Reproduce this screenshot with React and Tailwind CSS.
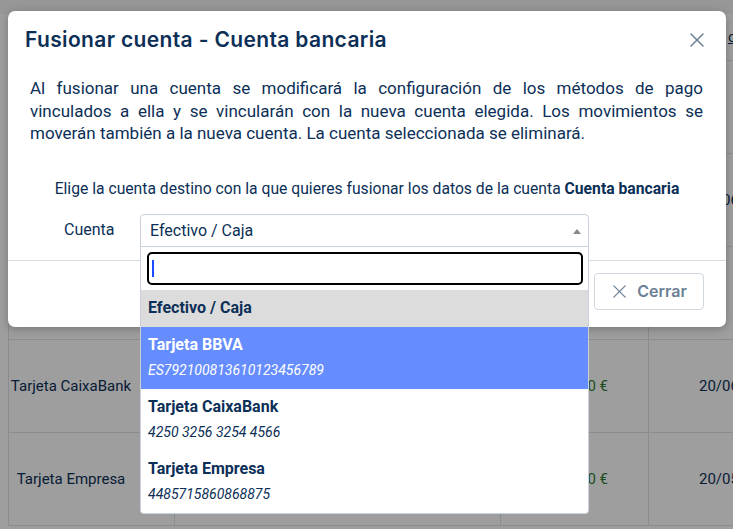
import React from 'react';

const rows = [
    { name: 'Efectivo / Caja', amount: '120,00 €', date: '' },
    { name: 'Cuenta bancaria', amount: '980,00 €', date: '20/06/2023' },
    { name: 'Tarjeta BBVA', amount: '40,00 €', date: '' },
    { name: 'Tarjeta CaixaBank', amount: '0,00 €', date: '20/06/2023' },
    { name: 'Tarjeta Empresa', amount: '0,00 €', date: '20/05/2023' },
];

const options = [
    { name: 'Tarjeta BBVA', detail: 'ES7921008136101234567 89'.replace(' ', ''), active: true },
    { name: 'Tarjeta CaixaBank', detail: '4250 3256 3254 4566' },
    { name: 'Tarjeta Empresa', detail: '4485715860868875' },
];

const XIcon = ({ className, strokeWidth = 2 }) => (
    <svg viewBox="0 0 24 24" fill="none" stroke="currentColor" strokeWidth={strokeWidth} strokeLinecap="round" className={className}>
        <path d="M4 4l16 16M20 4L4 20" />
    </svg>
);

const App = () => {
    return (
        <div className="relative w-[733px] h-[529px] overflow-hidden bg-white font-['Roboto',sans-serif] text-[#0c2f57]">
            {/* table behind the modal */}
            <div className="h-[14px] bg-[#f4f4f4]" />
            <div className="ml-[8px] border-l border-[#dfe3e8]">
                <div className="flex h-[47px] border-b border-[#dfe3e8] text-[15px]">
                    <div className="w-[640px] shrink-0" />
                    <div className="flex-1 min-w-0 flex items-center pl-[79px] underline whitespace-nowrap">cobro</div>
                </div>
                {rows.map((row, i) => (
                    <div key={i} className="flex h-[93px] border-b border-[#dfe3e8] text-[15px]">
                        <div className="w-[124px] shrink-0 flex items-center justify-center whitespace-nowrap">{row.name}</div>
                        <div className="w-[42px] shrink-0 border-r border-[#dfe3e8]" />
                        <div className="w-[326px] shrink-0 border-r border-[#dfe3e8]" />
                        <div className="w-[148px] shrink-0 border-r border-[#dfe3e8] flex items-center justify-end pr-[40px] text-[#2e7d32] whitespace-nowrap">{row.amount}</div>
                        <div className="flex-1 min-w-0 flex items-center pl-[50px] whitespace-nowrap">{row.date}</div>
                    </div>
                ))}
            </div>

            {/* overlay */}
            <div className="absolute inset-0 bg-black/[0.38]" />

            {/* modal */}
            <div className="absolute left-[8px] top-[11px] w-[718px] h-[316px] bg-white rounded-[7px] shadow-[0_2px_8px_rgba(0,0,0,0.25)] flex flex-col">
                <div className="flex items-center justify-between pl-[17px] pr-[20px] pt-[15px]">
                    <h2 className="font-['Inter',sans-serif] font-semibold text-[21px] leading-[28px] tracking-[0.35px] text-[#0c2f57]">
                        Fusionar cuenta - Cuenta bancaria
                    </h2>
                    <XIcon className="w-[18px] h-[18px] text-[#6b7f95]" />
                </div>

                <p className="mt-[23px] pl-[22px] pr-[23px] text-[17px] leading-[22.5px] text-justify text-[#0c2f57]">
                    Al fusionar una cuenta se modificará la configuración de los métodos de pago vinculados a ella y se vincularán con la nueva cuenta elegida. Los movimientos se moverán también a la nueva cuenta. La cuenta seleccionada se eliminará.
                </p>

                <p className="mt-[33px] text-center text-[15.7px] leading-[22px] text-[#0c2f57]">
                    Elige la cuenta destino con la que quieres fusionar los datos de la cuenta <b className="font-bold">Cuenta bancaria</b>
                </p>

                <div className="mt-[14px] flex items-center pl-[56px]">
                    <span className="w-[76px] text-[16px]">Cuenta</span>
                    <div className="relative w-[449px]">
                        <div className="h-[33px] border border-[#c9d1db] rounded-t-[4px] flex items-center justify-between pl-[9px] pr-[7px] text-[16px]">
                            <span className="mt-[1px]">Efectivo / Caja</span>
                            <span className="w-0 h-0 border-l-[4px] border-r-[4px] border-b-[5px] border-l-transparent border-r-transparent border-b-[#888] mt-[2px]" />
                        </div>
                        {/* dropdown */}
                        <div className="absolute left-0 top-[33px] w-full bg-white border border-t-0 border-[#c9d1db] rounded-b-[4px] z-10">
                            <div className="pt-[5px] pl-[6px] pr-[5px] pb-[5px]">
                                <div className="h-[33px] border-2 border-black rounded-[5px] flex items-center pl-[3px]">
                                    <span className="w-[2px] h-[17px] bg-[#1a4dff]" />
                                </div>
                            </div>
                            <div className="h-[37px] bg-[#dcdcdc] flex items-center pl-[7px] font-bold text-[16px]">Efectivo / Caja</div>
                            {options.map((opt) => (
                                <div key={opt.name} className={`h-[62px] pl-[7px] pt-[7px] ${opt.active ? 'bg-[#668dff] text-white' : 'text-[#0c2f57]'}`}>
                                    <div className="font-bold text-[16px] leading-[22px]">{opt.name}</div>
                                    <div className="italic text-[14px] leading-[20px] mt-[4px]">{opt.detail}</div>
                                </div>
                            ))}
                        </div>
                    </div>
                </div>

                <div className="mt-[13px] border-t border-[#d5dbe1] flex justify-end pt-[12px] pr-[22px]">
                    <button className="h-[37px] w-[110px] border border-[#d0d7de] rounded-[4px] flex items-center justify-center gap-[9px] font-['Inter',sans-serif] font-semibold text-[16px] text-[#6b7f95]">
                        <XIcon className="w-[17px] h-[17px]" strokeWidth={1.8} />
                        Cerrar
                    </button>
                </div>
            </div>
        </div>
    );
};

export default App;
